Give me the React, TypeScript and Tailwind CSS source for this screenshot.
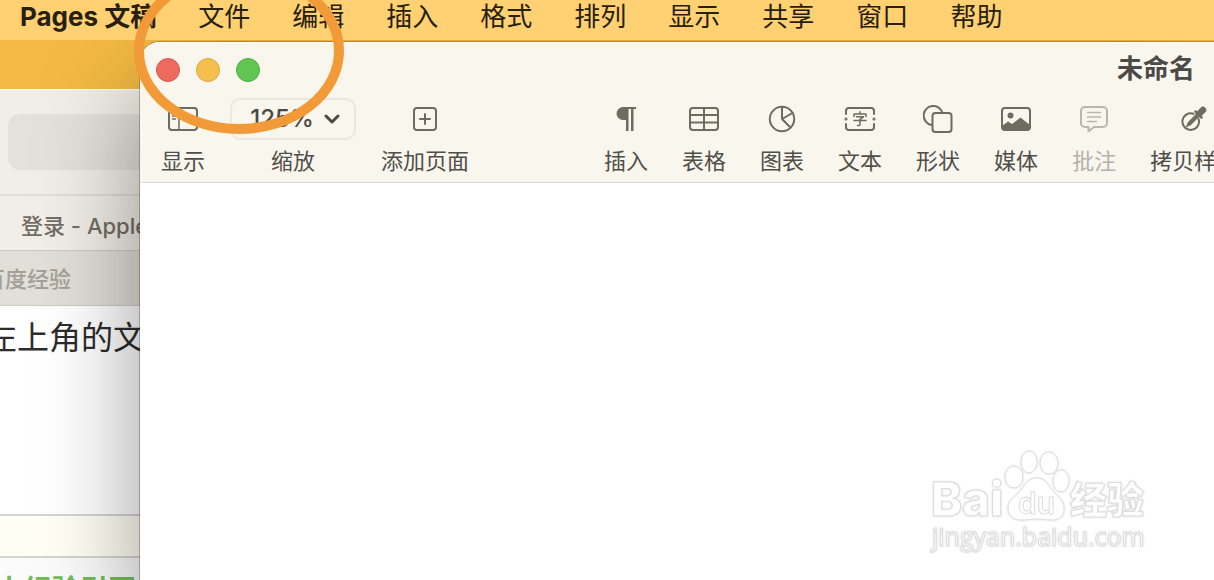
import React from 'react';

const menuItems = ['文件', '编辑', '插入', '格式', '排列', '显示', '共享', '窗口', '帮助'];

const stroke = {
  fill: 'none',
  stroke: 'currentColor',
  strokeWidth: 2,
  strokeLinecap: 'round' as const,
  strokeLinejoin: 'round' as const,
};

const SidebarIcon = () => (
  <svg width="30" height="24" viewBox="0 0 30 24" {...stroke}>
    <rect x="1" y="1" width="28" height="22" rx="3" />
    <path d="M11 1v22M4.500 6h3M4.500 12h3M4.500 9h3" strokeWidth="1.500" />
  </svg>
);

const AddPageIcon = () => (
  <svg width="24" height="24" viewBox="0 0 24 24" {...stroke}>
    <rect x="1" y="1" width="22" height="22" rx="3" />
    <path d="M12 7v10M7 12h10" />
  </svg>
);

const ParagraphIcon = () => (
  <svg width="20" height="24" viewBox="0 0 20 24" fill="currentColor">
    <path d="M7 0h13v2h-2.500v22h-2.500V2h-2.500v22H10V13H7A6.500 6.500 0 0 1 7 0z" />
  </svg>
);

const TableIcon = () => (
  <svg width="30" height="24" viewBox="0 0 30 24" {...stroke}>
    <rect x="1" y="1" width="28" height="22" rx="3" />
    <path d="M15 1v22M1 8h28M1 15.500h28" />
  </svg>
);

const ChartIcon = () => (
  <svg width="28" height="28" viewBox="0 0 28 28" {...stroke}>
    <circle cx="14" cy="14" r="12.200" />
    <path d="M14 2v12l8.500 8.500M14 14l10.500-6" />
  </svg>
);

const TextBoxIcon = () => (
  <svg width="32" height="24" viewBox="0 0 32 24" {...stroke}>
    <path d="M2 7V4a3 3 0 0 1 3-3h22a3 3 0 0 1 3 3v3M2 17v3a3 3 0 0 0 3 3h22a3 3 0 0 0 3-3v-3" />
    <circle cx="2" cy="12" r="0.600" />
    <circle cx="30" cy="12" r="0.600" />
    <path d="M16 4.800v1.700M10 9.500V7h12v2.500M12.500 9.800h7L16 12.300M10 13.500h12M16 12.500v5q0 1.200-2.500 1" strokeWidth="1.500" />
  </svg>
);

const ShapeIcon = () => (
  <svg width="30" height="28" viewBox="0 0 30 28" {...stroke}>
    <path d="M8.500 20A9.600 9.600 0 1 1 19.500 8" />
    <rect x="9.500" y="8" width="19" height="19" rx="3" />
  </svg>
);

const MediaIcon = () => (
  <svg width="30" height="24" viewBox="0 0 30 24" {...stroke}>
    <rect x="1" y="1" width="28" height="22" rx="3" />
    <circle cx="9.500" cy="8.500" r="3" fill="currentColor" stroke="none" />
    <path d="M1 19l6-4.500 4 2.500 8.500-6.500L29 18v2a3 3 0 0 1-3 3H4a3 3 0 0 1-3-3z" fill="currentColor" stroke="none" />
  </svg>
);

const CommentIcon = () => (
  <svg width="28" height="26" viewBox="0 0 28 26" {...stroke}>
    <path d="M5 1h18a4 4 0 0 1 4 4v12a4 4 0 0 1-4 4h-9l-5.500 4.500V21H5a4 4 0 0 1-4-4V5a4 4 0 0 1 4-4z" />
    <path d="M7.500 6.500h13M7.500 11h13M7.500 15.500h9" strokeWidth="1.500" />
  </svg>
);

const DropperIcon = () => (
  <svg width="26" height="26" viewBox="0 0 26 26" {...stroke}>
    <path d="M12.500 7.800a8.300 8.300 0 1 0 5 5" />
    <path d="M5.500 20.500l2-4.500 7.500-7.500 2.500 2.500-7.500 7.500z" fill="currentColor" strokeWidth="1" />
    <path d="M14.500 5.500l6 6" strokeWidth="2.500" />
    <path d="M18 8l4-4" strokeWidth="6.500" />
  </svg>
);

const insertTools = [
  { label: '插入', icon: <ParagraphIcon /> },
  { label: '表格', icon: <TableIcon /> },
  { label: '图表', icon: <ChartIcon /> },
  { label: '文本', icon: <TextBoxIcon /> },
  { label: '形状', icon: <ShapeIcon /> },
  { label: '媒体', icon: <MediaIcon /> },
  { label: '批注', icon: <CommentIcon />, disabled: true },
  { label: '拷贝样式', icon: <DropperIcon /> },
];

type ToolProps = {
  label: string;
  icon: React.ReactNode;
  disabled?: boolean;
};

const Tool: React.FC<ToolProps> = ({ label, icon, disabled }) => (
  <button
    disabled={disabled}
    className="flex shrink-0 flex-col items-center whitespace-nowrap text-[#6e6b60] disabled:text-[#b9b6ad]"
  >
    <span className="flex h-11 items-center">{icon}</span>
    <span className={disabled ? 'text-[#b3b1aa]' : 'text-[#504e49]'}>{label}</span>
  </button>
);

const MenuBar = () => (
  <nav className="z-10 flex h-10 shrink-0 items-center gap-[42px] overflow-hidden bg-[#ffd172] pb-1.5 pl-5 text-[26px] leading-8 whitespace-nowrap text-[#27200f]">
    <button className="font-bold">Pages 文稿</button>
    {menuItems.map((item) => (
      <button key={item}>{item}</button>
    ))}
  </nav>
);

const BrowserWindow = () => (
  <aside className="flex w-[140px] shrink-0 flex-col overflow-hidden whitespace-nowrap pt-[49px] text-[22px]">
    <div className="flex h-[105px] shrink-0 items-center border-t border-white bg-[#f1eee7] pl-2">
      <input aria-label="地址" className="h-14 w-80 shrink-0 rounded-xl bg-[#e4e1db]" />
    </div>
    <div className="h-14 shrink-0 border-t-2 border-[#e1ded7] bg-[#f1eee7] pl-[21px] leading-[60px] font-medium text-[#716e66]">
      登录 - Apple
    </div>
    <div className="-ml-[17px] h-14 shrink-0 border-y border-[#cdcac4] bg-[#e2dfd8] leading-[56px] font-medium text-[#a3a098]">
      百度经验
    </div>
    <div className="-ml-[15px] h-[208px] shrink-0 bg-white pt-2 text-[32px] leading-[48px] text-[#2c2c2c]">左上角的文</div>
    <div className="h-11 shrink-0 border-y-2 border-[#d4d4d4] bg-[#fffff5]" />
    <div className="-ml-1 flex-1 bg-[#fbfbfb] pt-4 text-[28px] leading-8 font-bold text-[#73bd58]">
      上经验引网
    </div>
  </aside>
);

const Watermark = () => (
  <svg
    className="absolute right-[62px] bottom-[22px] drop-shadow-[0_0_1px_#ddd]"
    width="222"
    height="112"
    viewBox="0 0 222 112"
    fill="#fff"
    stroke="#dcdcdc"
    strokeWidth="1"
  >
    <text x="1" y="70" fontFamily="Inter" fontSize="47" fontWeight="800">Bai</text>
    <ellipse cx="84" cy="31" rx="9" ry="11" />
    <ellipse cx="99" cy="16" rx="8" ry="11" />
    <ellipse cx="119" cy="17" rx="9" ry="11" />
    <ellipse cx="131" cy="35" rx="8" ry="11" />
    <path d="M107 32c-8 0-12 6-16 12-5 7-13 9-13 18s6 12 14 12c6 0 10-1 15-1s9 1 15 1c8 0 13-4 12-13-1-8-7-11-12-17-4-6-8-12-15-12z" />
    <text x="88" y="68" fontFamily="Inter" fontSize="30" fontWeight="600">du</text>
    <text x="140" y="68" fontFamily="Noto Sans CJK SC" fontSize="37" fontWeight="900">经验</text>
    <text x="2" y="100" fontFamily="Open Sans" fontSize="25" fontWeight="500">jingyan.baidu.com</text>
  </svg>
);

const PagesWindow = () => (
  <main className="relative mt-0.5 flex min-w-0 flex-1 flex-col overflow-clip rounded-tl-[20px] bg-white shadow-[0_50px_100px_rgba(0,0,0,0.4),0_0_0_1px_rgba(60,50,20,0.3)]">
    <header className="bg-[#f9f6ee]">
      <div className="flex h-14 items-center gap-4 border-t border-white pr-[19px] pb-0.5 pl-4">
        <button aria-label="关闭" className="size-6 rounded-full border border-[#d9584d] bg-[#ee6a5f]" />
        <button aria-label="最小化" className="size-6 rounded-full border border-[#dba63f] bg-[#f5bf4f]" />
        <button aria-label="缩放窗口" className="size-6 rounded-full border border-[#50ac42] bg-[#62c655]" />
        <h1 className="ml-auto pb-0.5 text-[26px] font-bold text-[#4b4a47]">未命名</h1>
      </div>
      <div className="flex h-[85px] overflow-hidden border-b border-[#d9d9d9] pl-[21px] text-[22px] leading-[42px]">
        <Tool label="显示" icon={<SidebarIcon />} />
        <div className="mx-[25px] flex shrink-0 flex-col items-center">
          <button
            id="zoom"
            className="flex h-11 w-[126px] items-center justify-center gap-2.5 rounded-[10px] border-2 border-[#ebe8e1] pl-1 text-2xl font-medium text-[#4b4943]"
          >
            125%
            <svg width="16" height="10" viewBox="0 0 16 10" {...stroke} strokeWidth="3">
              <path d="M2 2l6 6 6-6" />
            </svg>
          </button>
          <label htmlFor="zoom" className="text-[#504e49]">缩放</label>
        </div>
        <Tool label="添加页面" icon={<AddPageIcon />} />
        <div className="ml-[135px] flex gap-[34px]">
          {insertTools.map((tool) => (
            <Tool key={tool.label} {...tool} />
          ))}
        </div>
      </div>
    </header>
    <Watermark />
  </main>
);

// hand-drawn ring around the window buttons
const Highlight = () => (
  <svg className="pointer-events-none absolute top-0 left-0 z-20" width="360" height="140" fill="none">
    <ellipse cx="239" cy="51" rx="100" ry="78" stroke="#f29a37" strokeWidth="10" />
  </svg>
);

const App: React.FC = () => (
  <div className="relative flex h-screen flex-col overflow-hidden bg-[#f3b942] font-['Inter','Noto_Sans_CJK_SC',sans-serif]">
    <MenuBar />
    <div className="flex min-h-0 flex-1">
      <BrowserWindow />
      <PagesWindow />
    </div>
    <Highlight />
  </div>
);

export default App;
